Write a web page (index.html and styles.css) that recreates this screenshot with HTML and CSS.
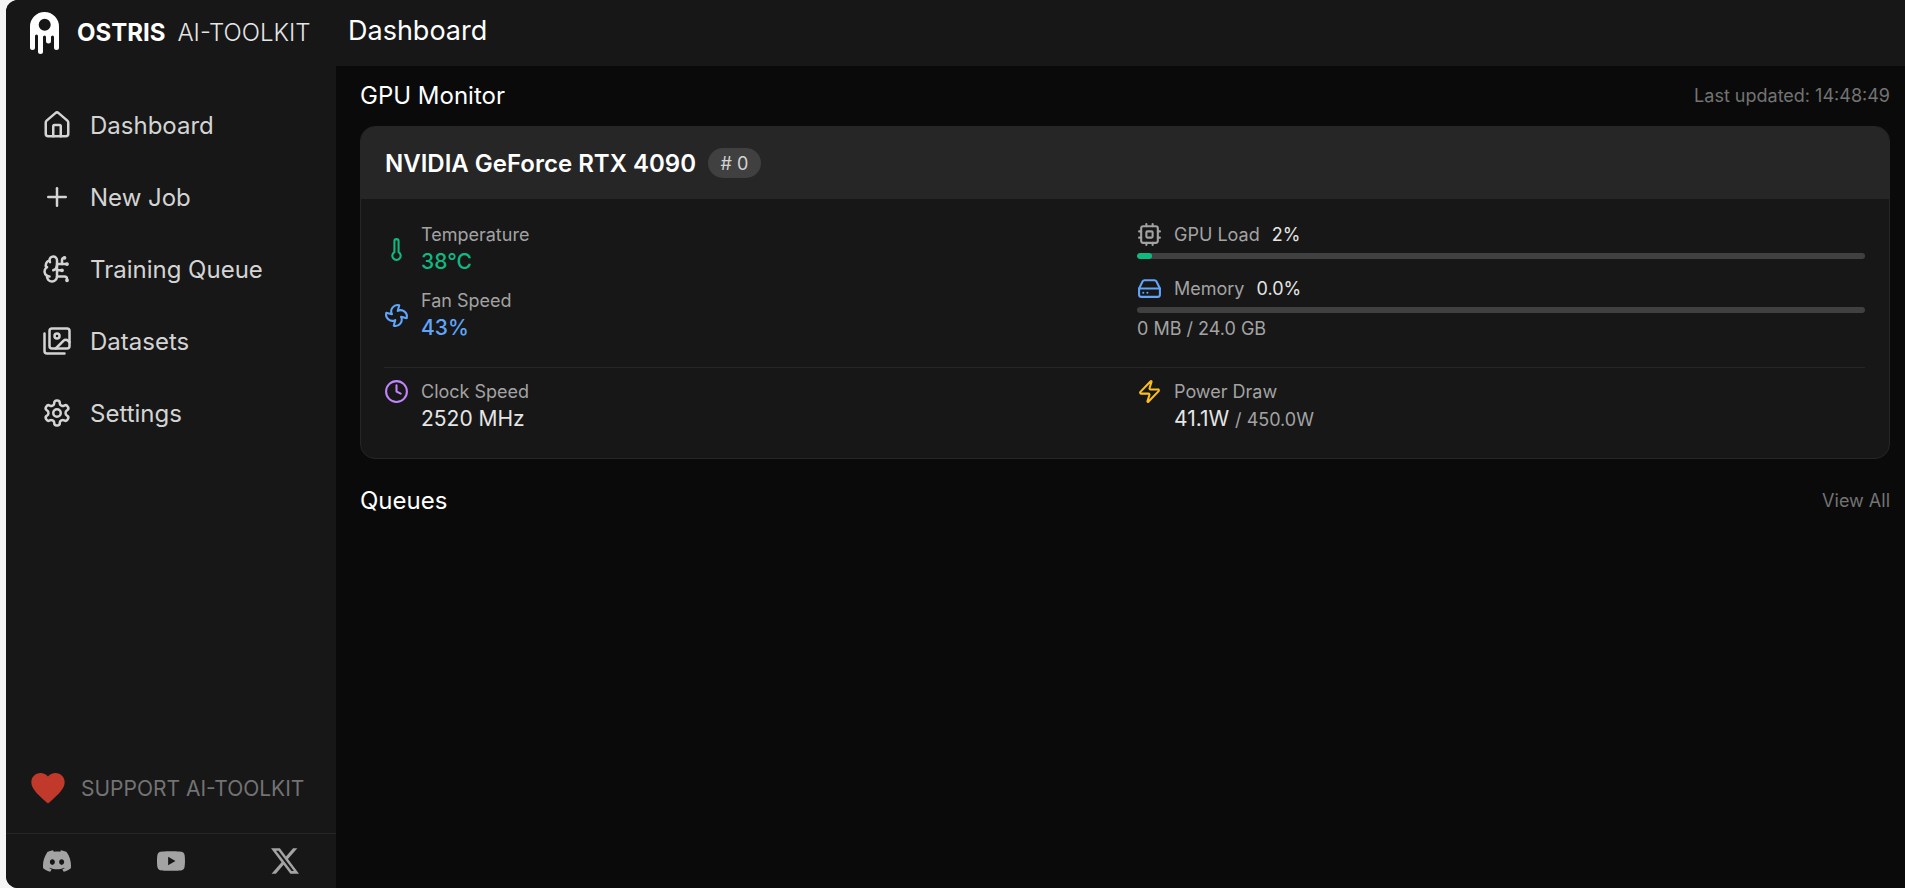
FILE: index.html
```html
<!DOCTYPE html>
<html lang="en">
<head>
  <meta charset="UTF-8">
  <title>Dashboard - AI-Toolkit</title>
  <link rel="stylesheet" href="styles.css">
</head>
<body>
  <div class="app">
    <aside class="sidebar">
      <div class="brand">
        <svg class="brand-logo" viewBox="0 0 29 42" fill="#fff">
          <path fill-rule="evenodd" d="M0 14.500A14.500 14.500 0 0 1 29 14.500V35.500a2.500 2.500 0 0 1-5 0V25a1.500 1.500 0 0 0-3 0V29a2.500 2.500 0 0 1-5 0V25a1.500 1.500 0 0 0-3 0V39.500a2.500 2.500 0 0 1-5 0V24a1.500 1.500 0 0 0-3 0V35.500a2.500 2.500 0 0 1-5 0zM14.700 6.700a6 6 0 1 0 0 12 6 6 0 0 0 0-12z"/>
        </svg>
        <span class="brand-name">OSTRIS</span>
        <span class="brand-sub">AI-TOOLKIT</span>
      </div>
      <nav class="nav">
        <a class="nav-item">
          <svg class="nav-icon" viewBox="0 0 24 24"><path d="M15 21v-8a1 1 0 0 0-1-1h-4a1 1 0 0 0-1 1v8"/><path d="M3 10a2 2 0 0 1 .709-1.528l7-5.999a2 2 0 0 1 2.582 0l7 5.999A2 2 0 0 1 21 10v9a2 2 0 0 1-2 2H5a2 2 0 0 1-2-2z"/></svg>
          Dashboard
        </a>
        <a class="nav-item">
          <svg class="nav-icon" viewBox="0 0 24 24"><path d="M5 12h14"/><path d="M12 5v14"/></svg>
          New Job
        </a>
        <a class="nav-item">
          <svg class="nav-icon" viewBox="0 0 24 24"><path d="M12 5a3 3 0 1 0-5.997.125 4 4 0 0 0-2.526 5.77 4 4 0 0 0 .556 6.588A4 4 0 1 0 12 18Z"/><path d="M9 13a4.500 4.500 0 0 0 3-4"/><path d="M6.003 5.125A3 3 0 0 0 6.401 6.500"/><path d="M3.477 10.896a4 4 0 0 1 .585-.396"/><path d="M6 18a4 4 0 0 1-1.967-.516"/><path d="M12 13h4"/><path d="M12 18h6a2 2 0 0 1 2 2v1"/><path d="M12 8h8"/><path d="M16 8V5a2 2 0 0 1 2-2"/><circle cx="16" cy="13" r=".5"/><circle cx="18" cy="3" r=".5"/><circle cx="20" cy="21" r=".5"/><circle cx="20" cy="8" r=".5"/></svg>
          Training Queue
        </a>
        <a class="nav-item">
          <svg class="nav-icon" viewBox="0 0 24 24"><path d="M18 22H4a2 2 0 0 1-2-2V6"/><path d="m22 13-1.296-1.296a2.410 2.410 0 0 0-3.408 0L11 18"/><circle cx="12" cy="8" r="2"/><rect width="16" height="16" x="6" y="2" rx="2"/></svg>
          Datasets
        </a>
        <a class="nav-item">
          <svg class="nav-icon" viewBox="0 0 24 24"><path d="M12.220 2h-.44a2 2 0 0 0-2 2v.18a2 2 0 0 1-1 1.730l-.43.25a2 2 0 0 1-2 0l-.15-.08a2 2 0 0 0-2.730.73l-.22.38a2 2 0 0 0 .73 2.730l.15.1a2 2 0 0 1 1 1.720v.51a2 2 0 0 1-1 1.740l-.15.09a2 2 0 0 0-.73 2.730l.22.38a2 2 0 0 0 2.730.73l.15-.08a2 2 0 0 1 2 0l.43.25a2 2 0 0 1 1 1.730V20a2 2 0 0 0 2 2h.44a2 2 0 0 0 2-2v-.18a2 2 0 0 1 1-1.730l.43-.25a2 2 0 0 1 2 0l.15.08a2 2 0 0 0 2.730-.73l.22-.39a2 2 0 0 0-.73-2.730l-.15-.08a2 2 0 0 1-1-1.740v-.5a2 2 0 0 1 1-1.740l.15-.09a2 2 0 0 0 .73-2.730l-.22-.38a2 2 0 0 0-2.730-.73l-.15.08a2 2 0 0 1-2 0l-.43-.25a2 2 0 0 1-1-1.730V4a2 2 0 0 0-2-2z"/><circle cx="12" cy="12" r="3"/></svg>
          Settings
        </a>
      </nav>
      <a class="support">
        <svg class="support-heart" viewBox="0 0 24 24" fill="#c0392b"><path d="M12 21.350l-1.450-1.320C5.400 15.360 2 12.280 2 8.500 2 5.420 4.420 3 7.500 3c1.740 0 3.410.81 4.500 2.090C13.090 3.810 14.760 3 16.500 3 19.580 3 22 5.420 22 8.500c0 3.780-3.400 6.860-8.550 11.540L12 21.350z"/></svg>
        SUPPORT AI-TOOLKIT
      </a>
      <div class="socials">
        <a class="social"><svg viewBox="0 0 24 24"><path d="M20.317 4.370a19.791 19.791 0 0 0-4.885-1.515.074.074 0 0 0-.079.037c-.211.375-.445.865-.608 1.250-1.845-.276-3.680-.276-5.487 0-.164-.393-.406-.874-.618-1.250a.077.077 0 0 0-.079-.037 19.736 19.736 0 0 0-4.885 1.515.070.070 0 0 0-.032.028C.533 9.046-.319 13.580.099 18.058a.082.082 0 0 0 .031.056c2.053 1.508 4.041 2.423 5.993 3.029a.078.078 0 0 0 .084-.028c.462-.630.873-1.295 1.226-1.994a.076.076 0 0 0-.042-.106c-.653-.248-1.274-.550-1.872-.892a.077.077 0 0 1-.008-.128c.126-.094.252-.192.372-.291a.074.074 0 0 1 .078-.011c3.928 1.793 8.180 1.793 12.061 0a.074.074 0 0 1 .079.010c.120.099.246.198.373.292a.077.077 0 0 1-.007.128 12.299 12.299 0 0 1-1.873.891.077.077 0 0 0-.041.107c.360.698.772 1.363 1.225 1.993a.076.076 0 0 0 .084.029c1.961-.607 3.950-1.522 6.002-3.029a.077.077 0 0 0 .031-.055c.500-5.177-.838-9.674-3.548-13.660a.061.061 0 0 0-.031-.029zM8.020 15.331c-1.183 0-2.157-1.086-2.157-2.419s.955-2.419 2.157-2.419c1.211 0 2.176 1.095 2.157 2.419 0 1.333-.956 2.419-2.157 2.419zm7.975 0c-1.183 0-2.157-1.086-2.157-2.419s.955-2.419 2.157-2.419c1.211 0 2.176 1.095 2.157 2.419 0 1.333-.946 2.419-2.157 2.419z"/></svg></a>
        <a class="social"><svg viewBox="0 0 24 24"><path d="M23.498 6.186a3.016 3.016 0 0 0-2.122-2.136C19.505 3.545 12 3.545 12 3.545s-7.505 0-9.377.505A3.017 3.017 0 0 0 .502 6.186C0 8.070 0 12 0 12s0 3.930.502 5.814a3.016 3.016 0 0 0 2.122 2.136c1.871.505 9.376.505 9.376.505s7.505 0 9.377-.505a3.015 3.015 0 0 0 2.122-2.136C24 15.930 24 12 24 12s0-3.930-.502-5.814zM9.545 15.568V8.432L15.818 12l-6.273 3.568z"/></svg></a>
        <a class="social"><svg viewBox="0 0 24 24"><path d="M18.901 1.153h3.680l-8.040 9.190L24 22.846h-7.406l-5.800-7.584-6.638 7.584H.474l8.600-9.830L0 1.154h7.594l5.243 6.932zM17.610 20.644h2.039L6.486 3.240H4.298z"/></svg></a>
      </div>
    </aside>

    <div class="content">
      <header class="topbar"><h1 class="page-title">Dashboard</h1></header>
      <main class="main">
        <div class="section-head">
          <h2>GPU Monitor</h2>
          <span class="muted">Last updated: 14:48:49</span>
        </div>

        <section class="card">
          <div class="card-head">
            <h3>NVIDIA GeForce RTX 4090</h3>
            <span class="badge"># 0</span>
          </div>
          <div class="card-body">
            <div class="metric-grid">
              <div class="metric-col">
                <div class="stat">
                  <svg class="stat-icon green" viewBox="0 0 24 24"><path d="M14 4v10.540a4 4 0 1 1-4 0V4a2 2 0 0 1 4 0Z"/></svg>
                  <div>
                    <div class="stat-label">Temperature</div>
                    <div class="stat-value strong green">38°C</div>
                  </div>
                </div>
                <div class="stat">
                  <svg class="stat-icon blue" viewBox="0 0 24 24"><path d="M10.827 16.379a6.082 6.082 0 0 1-8.618-7.002l5.412 1.450a6.082 6.082 0 0 1 7.002-8.618l-1.450 5.412a6.082 6.082 0 0 1 8.618 7.002l-5.412-1.450a6.082 6.082 0 0 1-7.002 8.618l1.450-5.412Z"/></svg>
                  <div>
                    <div class="stat-label">Fan Speed</div>
                    <div class="stat-value strong blue">43%</div>
                  </div>
                </div>
              </div>
              <div class="metric-col bars">
                <div class="bar-row">
                  <svg class="stat-icon grey" viewBox="0 0 24 24"><rect width="16" height="16" x="4" y="4" rx="2"/><rect width="6" height="6" x="9" y="9" rx="1"/><path d="M15 2v2"/><path d="M15 20v2"/><path d="M2 15h2"/><path d="M2 9h2"/><path d="M20 15h2"/><path d="M20 9h2"/><path d="M9 2v2"/><path d="M9 20v2"/></svg>
                  <span class="stat-label">GPU Load</span>
                  <span class="bar-value">2%</span>
                </div>
                <div class="bar"><div class="bar-fill" style="width: 2%"></div></div>
                <div class="bar-row second">
                  <svg class="stat-icon blue" viewBox="0 0 24 24"><line x1="22" x2="2" y1="12" y2="12"/><path d="M5.450 5.110 2 12v6a2 2 0 0 0 2 2h16a2 2 0 0 0 2-2v-6l-3.450-6.890A2 2 0 0 0 16.760 4H7.240a2 2 0 0 0-1.790 1.110z"/><line x1="6" x2="6.010" y1="16" y2="16"/><line x1="10" x2="10.010" y1="16" y2="16"/></svg>
                  <span class="stat-label">Memory</span>
                  <span class="bar-value">0.0%</span>
                </div>
                <div class="bar"><div class="bar-fill" style="width: 0%"></div></div>
                <div class="bar-note">0 MB / 24.0 GB</div>
              </div>
            </div>
            <div class="metric-grid bottom">
              <div class="stat">
                <svg class="stat-icon purple" viewBox="0 0 24 24"><circle cx="12" cy="12" r="10"/><polyline points="12 6 12 12 16 14"/></svg>
                <div>
                  <div class="stat-label">Clock Speed</div>
                  <div class="stat-value">2520 MHz</div>
                </div>
              </div>
              <div class="stat">
                <svg class="stat-icon yellow" viewBox="0 0 24 24"><path d="M4 14a1 1 0 0 1-.78-1.630l9.900-10.200a.5.500 0 0 1 .86.46l-1.920 6.020A1 1 0 0 0 13 10h7a1 1 0 0 1 .78 1.630l-9.900 10.200a.5.500 0 0 1-.86-.46l1.920-6.020A1 1 0 0 0 11 14z"/></svg>
                <div>
                  <div class="stat-label">Power Draw</div>
                  <div class="stat-value">41.1W <span class="stat-of">/ 450.0W</span></div>
                </div>
              </div>
            </div>
          </div>
        </section>

        <div class="section-head queues">
          <h2>Queues</h2>
          <a class="muted">View All</a>
        </div>
      </main>
    </div>
  </div>
</body>
</html>
```

FILE: styles.css
```css
* { box-sizing: border-box; }
html, body { height: 100%; margin: 0; }
body {
  font-family: Inter, "Noto Sans", sans-serif;
  background: #f5f5f5;
  padding-left: 6px;
  overflow: hidden;
}
h1, h2, h3 { margin: 0; font-weight: 400; }

.app {
  display: flex;
  height: 888px;
  background: #171717;
  border-radius: 12px 0 0 12px;
  overflow: hidden;
}

/* sidebar */
.sidebar {
  width: 330px;
  flex: none;
  display: flex;
  flex-direction: column;
  background: #171717;
}
.brand {
  height: 66px;
  display: flex;
  align-items: center;
  padding: 0 0 2px 24px;
  color: #fff;
  font-size: 24px;
}
.brand-logo { width: 29px; height: 42px; margin: 2px 18px 0 0; }
.brand-name { font-weight: 700; margin-right: 12px; }
.brand-sub { font-weight: 300; color: #e5e5e5; }
.nav { padding-top: 23px; }
.nav-item {
  height: 72px;
  display: flex;
  align-items: center;
  gap: 18px;
  padding-left: 36px;
  color: #d4d4d4;
  font-size: 24px;
}
.nav-icon {
  width: 30px;
  height: 30px;
  fill: none;
  stroke: currentColor;
  stroke-width: 2;
  stroke-linecap: round;
  stroke-linejoin: round;
}
.support {
  margin-top: auto;
  margin-bottom: 25px;
  height: 40px;
  display: flex;
  align-items: center;
  gap: 13px;
  padding-left: 22px;
  color: #737373;
  font-size: 21px;
}
.support-heart { width: 40px; height: 40px; }
.socials {
  height: 55px;
  display: flex;
  justify-content: center;
  align-items: center;
  border-top: 1px solid #262626;
}
.social { width: 114px; flex: none; display: flex; justify-content: center; }
.social svg { width: 28px; height: 28px; fill: #a3a3a3; }

/* right side */
.content { flex: 1; display: flex; flex-direction: column; min-width: 0; }
.topbar { height: 66px; flex: none; display: flex; align-items: center; padding: 0 12px 6px; }
.page-title { font-size: 27px; color: #fff; }
.main { flex: 1; background: #0a0a0a; padding: 0 15px 0 24px; }

.section-head {
  height: 60px;
  padding-bottom: 2px;
  display: flex;
  justify-content: space-between;
  align-items: center;
}
.section-head h2 { font-size: 24px; color: #fff; }
.muted { font-size: 18px; color: #737373; }
.queues { margin-top: 12px; }

/* gpu card */
.card {
  border: 1px solid #262626;
  border-radius: 15px;
  background: #171717;
  overflow: hidden;
}
.card-head {
  height: 72px;
  display: flex;
  align-items: center;
  gap: 12px;
  padding: 0 24px;
  background: #262626;
}
.card-head h3 { font-size: 24px; font-weight: 600; color: #fff; }
.badge {
  height: 30px;
  padding: 0 12.500px;
  display: flex;
  align-items: center;
  border-radius: 15px;
  background: #404040;
  color: #d4d4d4;
  font-size: 18px;
}
.card-body { padding: 23px 24px 24px 23px; }
.metric-grid {
  display: grid;
  grid-template-columns: 1fr 1fr;
  column-gap: 25px;
}
.metric-grid.bottom {
  margin-top: 25px;
  padding-top: 11px;
  border-top: 1px solid #262626;
}
.metric-grid.bottom .stat { align-items: flex-start; }
.metric-col { display: flex; flex-direction: column; gap: 12px; }
.metric-col.bars { gap: 0; }

.stat { display: flex; align-items: center; gap: 12px; }
.stat-icon {
  width: 25px;
  height: 25px;
  flex: none;
  fill: none;
  stroke: currentColor;
  stroke-width: 2;
  stroke-linecap: round;
  stroke-linejoin: round;
}
.stat-label { font-size: 18px; line-height: 25px; color: #a3a3a3; }
.stat-value { margin-top: 1px; font-size: 21px; line-height: 28px; color: #e5e5e5; }
.stat-value.strong { font-weight: 500; }
.stat-of { font-size: 18px; color: #a3a3a3; }
.green { color: #10b981; }
.blue { color: #60a5fa; }
.purple { color: #c084fc; }
.yellow { color: #fbbf24; }
.grey { color: #a3a3a3; }

.bar-row { display: flex; align-items: center; gap: 12px; height: 25px; }
.bar-row.second { margin-top: 17px; }
.bar-value { font-size: 18px; color: #e5e5e5; }
.bar {
  height: 6px;
  margin-top: 6px;
  border-radius: 3px;
  background: #404040;
  overflow: hidden;
}
.bar-fill { height: 100%; border-radius: 3px; background: #10b981; }
.bar-note { margin-top: 3px; font-size: 18px; line-height: 25px; color: #a3a3a3; }
```
